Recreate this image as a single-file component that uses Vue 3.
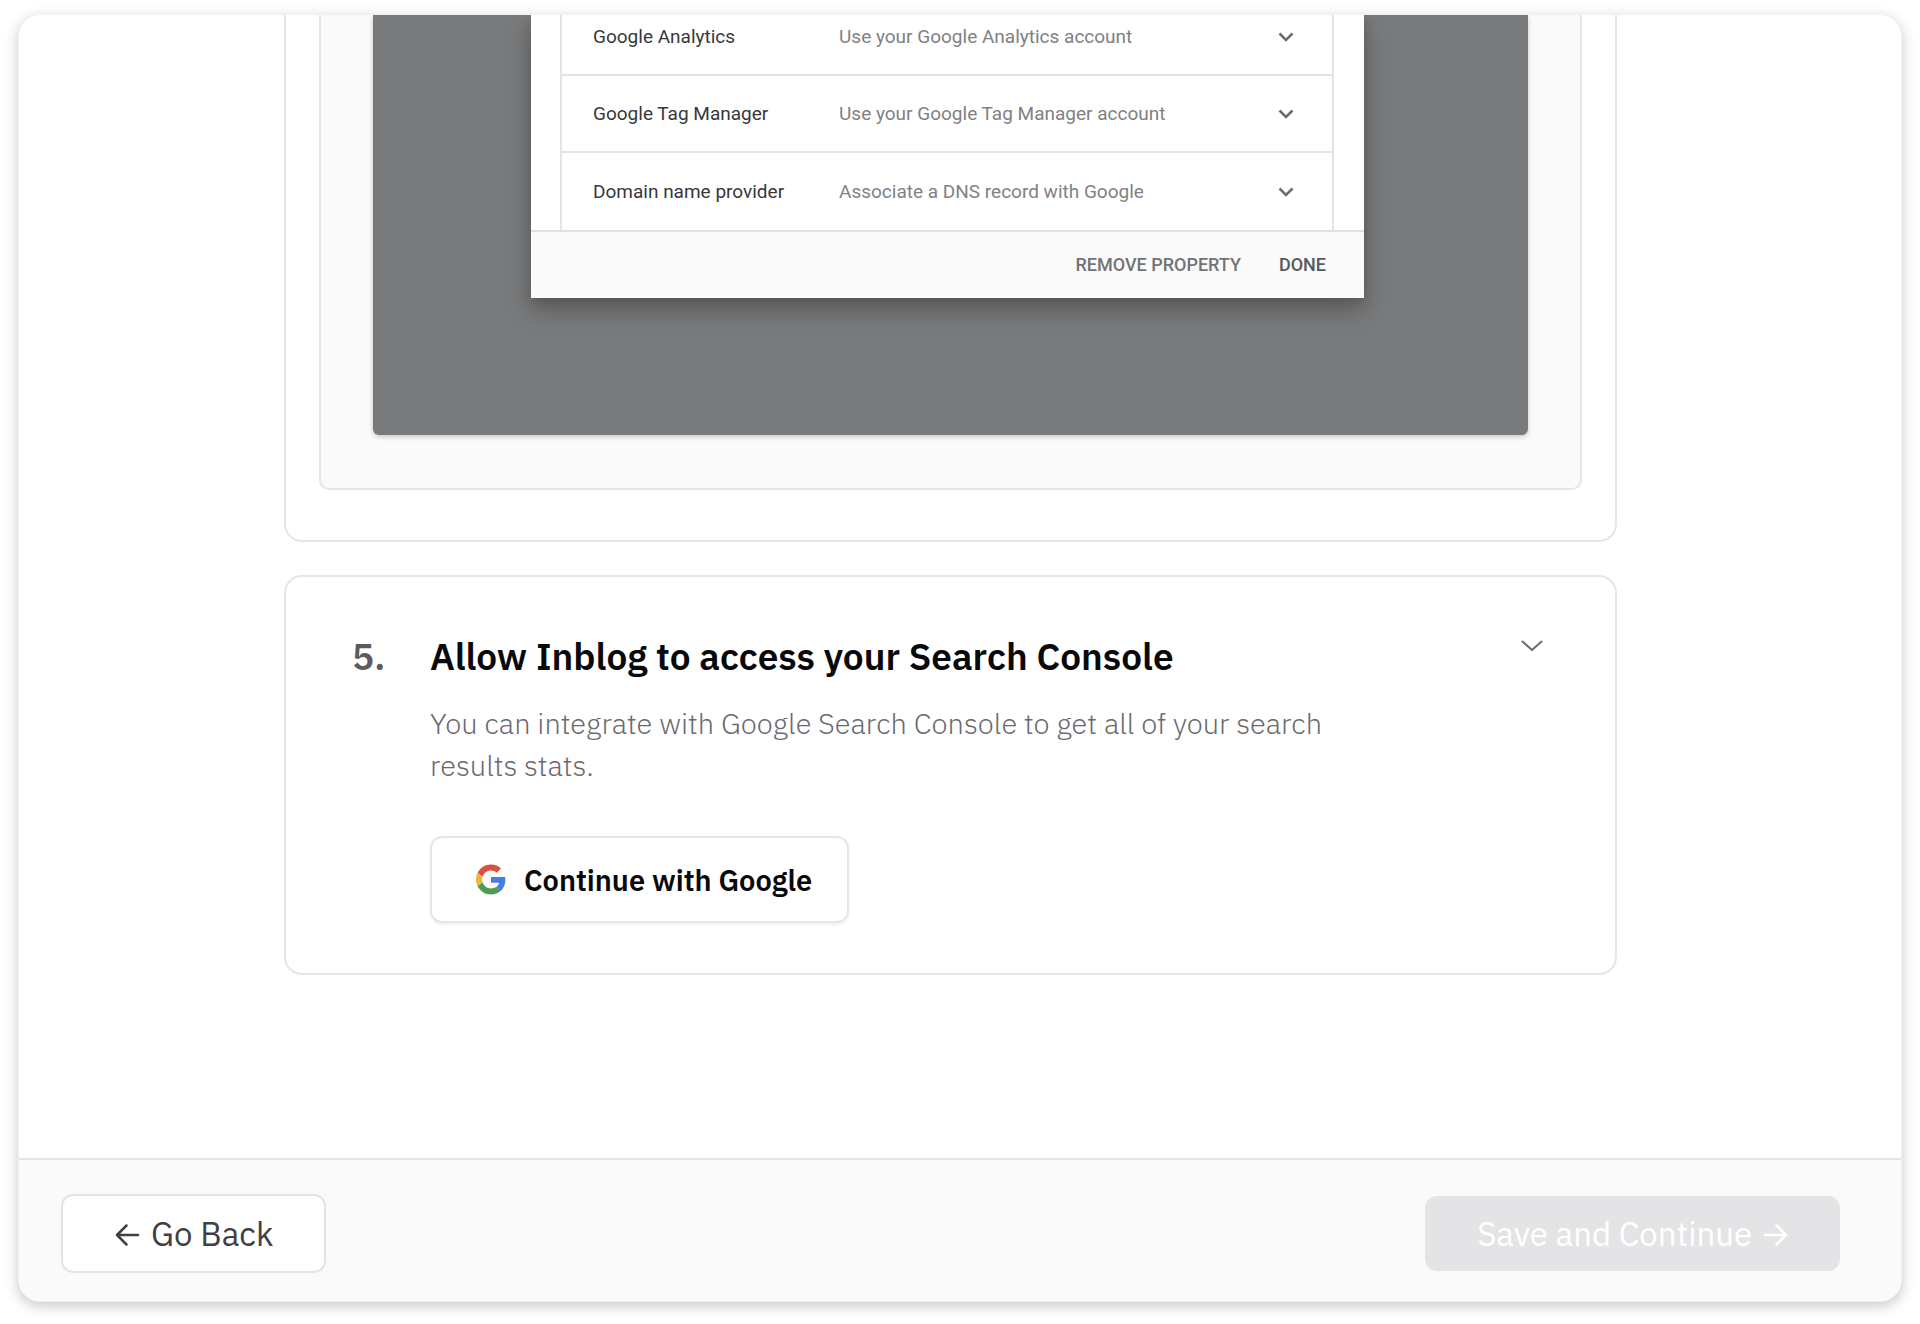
<script setup>
const methods = [
  { name: 'Google Analytics', hint: 'Use your Google Analytics account' },
  { name: 'Google Tag Manager', hint: 'Use your Google Tag Manager account' },
  { name: 'Domain name provider', hint: 'Associate a DNS record with Google' },
]
</script>

<template>
  <div class="page">
    <div class="window">
      <main class="content">
        <section class="step step-open">
          <div class="frame">
            <div class="backdrop">
              <div class="dialog">
                <ul class="methods">
                  <li v-for="m in methods" :key="m.name" class="method">
                    <span class="method-name">{{ m.name }}</span>
                    <span class="method-hint">{{ m.hint }}</span>
                    <svg class="method-chevron" viewBox="0 0 16 10" aria-hidden="true">
                      <path d="M1.500 1.500 8 8l6.500-6.500" />
                    </svg>
                  </li>
                </ul>
                <div class="dialog-actions">
                  <button type="button" class="text-button">REMOVE PROPERTY</button>
                  <button type="button" class="text-button strong">DONE</button>
                </div>
              </div>
            </div>
          </div>
        </section>

        <section class="step step-access">
          <span class="number">5.</span>
          <div class="body">
            <h2>Allow Inblog to access your Search Console</h2>
            <p>You can integrate with Google Search Console to get all of your search results stats.</p>
            <button type="button" class="google">
              <svg class="google-logo" viewBox="0 0 48 48" aria-hidden="true">
                <path fill="#d8503f" d="M24 9.500c3.540 0 6.710 1.220 9.210 3.600l6.850-6.850C35.900 2.380 30.470 0 24 0 14.620 0 6.510 5.380 2.560 13.220l7.980 6.190C12.430 13.720 17.740 9.500 24 9.500z" />
                <path fill="#4a7ce8" d="M46.980 24.550c0-1.570-.15-3.090-.38-4.550H24v9.020h12.940c-.58 2.960-2.260 5.480-4.780 7.180l7.730 6c4.510-4.180 7.090-10.360 7.090-17.650z" />
                <path fill="#edb63c" d="M10.530 28.590c-.48-1.450-.76-2.990-.76-4.590s.27-3.140.76-4.590l-7.980-6.190C.92 16.460 0 20.120 0 24s.92 7.540 2.560 10.780l7.970-6.190z" />
                <path fill="#4f9d55" d="M24 48c6.480 0 11.930-2.130 15.890-5.810l-7.730-6c-2.150 1.450-4.920 2.300-8.160 2.300-6.260 0-11.570-4.220-13.470-9.910l-7.980 6.190C6.510 42.620 14.620 48 24 48z" />
              </svg>
              Continue with Google
            </button>
          </div>
          <button type="button" class="collapse" aria-label="Toggle step">
            <svg viewBox="0 0 22 12" aria-hidden="true"><path d="M1.500 1.500 11 10l9.500-8.500" /></svg>
          </button>
        </section>
      </main>

      <footer class="actions">
        <button type="button" class="back">
          <svg class="arrow" viewBox="0 0 24 22" aria-hidden="true"><path d="M23 12H2M11.500 2.500 2 12l9.500 9.500" /></svg>
          Go Back
        </button>
        <button type="button" class="next" disabled>
          Save and Continue
          <svg class="arrow" viewBox="0 0 24 22" aria-hidden="true"><path d="M1 12h21M12.500 2.500 22 12l-9.500 9.500" /></svg>
        </button>
      </footer>
    </div>
  </div>
</template>

<style>
body {
  margin: 0;
  background: #fff;
}
</style>

<style scoped>
.page {
  box-sizing: border-box;
  min-height: 100vh;
  padding: 14px 18px 22px;
  display: flex;
  font-family: "IBM Plex Sans", Roboto, sans-serif;
  color: #09090b;
}

button {
  font-family: inherit;
  margin: 0;
}

.window {
  flex: 1;
  min-width: 0;
  display: flex;
  flex-direction: column;
  border: 1px solid #f2f2f2;
  border-radius: 22px;
  overflow: hidden;
  background: #fff;
  box-shadow: 0 4px 14px rgba(0, 0, 0, 0.22);
}

.content {
  flex: 1;
  display: flex;
  flex-direction: column;
  gap: 33px;
  width: 100%;
  max-width: 1352px;
  box-sizing: border-box;
  margin: 0 auto;
  padding-right: 19px;
}

.step {
  border: 2px solid #e6e6e7;
  border-radius: 18px;
  box-sizing: border-box;
}

.step-open {
  border-top: 0;
  border-radius: 0 0 18px 18px;
  padding: 0 33px 50px;
}

.frame {
  border: 2px solid #e6e6e7;
  border-top: 0;
  border-radius: 0 0 10px 10px;
  background: #fafafa;
  padding: 0 52px 53px;
}

.backdrop {
  background: #797a7b;
  border-radius: 0 0 6px 6px;
  padding: 0 164px 137px 158px;
  box-shadow: 0 2px 5px rgba(0, 0, 0, 0.2);
}

.dialog {
  background: #fff;
  font-family: Roboto, sans-serif;
  border-radius: 0 0 2px 2px;
  box-shadow: 0 12px 24px rgba(0, 0, 0, 0.26), 0 4px 12px rgba(0, 0, 0, 0.1);
}

.methods {
  list-style: none;
  margin: 0 30px 0 29px;
  padding: 0;
  border: solid #e4e4e4;
  border-width: 0 2px;
}

.method {
  box-sizing: border-box;
  height: 77px;
  display: flex;
  align-items: center;
  padding: 0 38px 0 31px;
  border-bottom: 2px solid #e4e4e4;
  font-size: 19px;
  line-height: 24px;
}

.method:first-child {
  height: 61px;
  padding-bottom: 15px;
}

.method:last-child {
  border-bottom: 0;
}

.method-name {
  width: 246px;
  color: #37383a;
}

.method-hint {
  flex: 1;
  color: #808184;
}

.method-chevron {
  width: 16px;
  height: 10px;
  fill: none;
  stroke: #6b6c6e;
  stroke-width: 2.5;
}

.dialog-actions {
  box-sizing: border-box;
  height: 68px;
  display: flex;
  align-items: center;
  justify-content: flex-end;
  gap: 38px;
  padding: 0 38px;
  background: #fafafa;
  border-top: 2px solid #e0e0e0;
}

.text-button {
  border: 0;
  padding: 0;
  background: none;
  font-size: 18px;
  line-height: 24px;
  font-weight: 500;
  color: #727375;
}

.text-button.strong {
  color: #55595c;
}

.step-access {
  display: flex;
  align-items: flex-start;
  padding: 49px 72px 50px 66px;
}

.number {
  width: 78px;
  flex: none;
  font-size: 37px;
  line-height: 60px;
  font-weight: 600;
  color: #5b5b60;
}

.body {
  flex: 1;
}

h2 {
  margin: 0 0 16px;
  font-size: 37px;
  line-height: 60px;
  font-weight: 600;
}

p {
  max-width: 930px;
  margin: 0 0 50px;
  font-size: 29px;
  line-height: 42px;
  font-weight: 300;
  color: #6a6a6f;
}

.google {
  display: flex;
  align-items: center;
  gap: 18px;
  height: 87px;
  padding: 0 35px 0 44px;
  border: 2px solid #e6e6e7;
  border-radius: 12px;
  background: #fff;
  font-size: 29px;
  font-weight: 600;
  color: #09090b;
  box-shadow: 0 2px 3px rgba(0, 0, 0, 0.06);
}

.google-logo {
  width: 30px;
  height: 31px;
}

.collapse {
  flex: none;
  display: flex;
  border: 0;
  background: none;
  padding: 14px 0;
}

.collapse svg {
  width: 22px;
  height: 12px;
  fill: none;
  stroke: #6c6c70;
  stroke-width: 2;
  stroke-linecap: round;
  stroke-linejoin: round;
}

.actions {
  box-sizing: border-box;
  height: 143px;
  display: flex;
  align-items: center;
  justify-content: space-between;
  padding: 6px 61px 0 42px;
  background: #fafafa;
  border-top: 2px solid #e4e4e5;
}

.back,
.next {
  display: flex;
  align-items: center;
  gap: 12px;
  font-size: 33px;
  line-height: 42px;
  font-weight: 400;
  border-radius: 12px;
}

.arrow {
  width: 24px;
  height: 22px;
  overflow: visible;
  fill: none;
  stroke: currentColor;
  stroke-width: 2.5;
  stroke-linecap: round;
  stroke-linejoin: round;
}

.back {
  height: 79px;
  padding: 0 51px 0 52px;
  border: 2px solid #e4e4e5;
  background: #fff;
  color: #3f3f44;
}

.next {
  height: 75px;
  padding: 0 52px;
  border: 0;
  background: #e4e4e6;
  color: #fff;
}
</style>
